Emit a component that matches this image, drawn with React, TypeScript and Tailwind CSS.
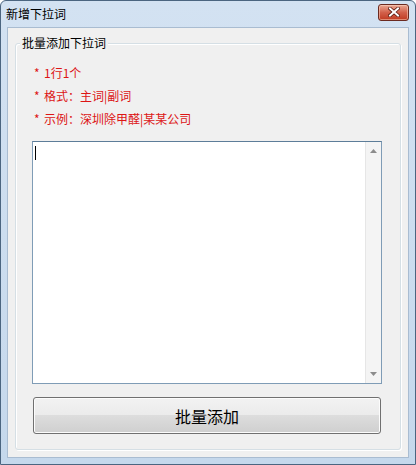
import {useState} from "react";

const TIPS = ["1行1个", "格式：主词|副词", "示例：深圳除甲醛|某某公司"];

function CloseButton() {
    return (
        <button className="w-[31px] h-[17px] mr-[6px] mt-[-4px] rounded-[3px] border border-[#6b2a20] bg-gradient-to-b from-[#e9a793] via-[#d2604a] to-[#c0391f] flex items-center justify-center shadow-[inset_0_0_0_1px_rgba(255,220,200,0.5)]">
            <svg width="12" height="10" viewBox="0 0 12 10">
                <path d="M2 1.5 L10 8.5 M10 1.5 L2 8.5" stroke="#5a1a10" strokeWidth="3.6" strokeLinecap="square" />
                <path d="M2 1.5 L10 8.5 M10 1.5 L2 8.5" stroke="#ffffff" strokeWidth="2" strokeLinecap="square" />
            </svg>
        </button>
    );
}

function ScrollBar() {
    return (
        <div className="w-[16px] h-full flex flex-col items-center justify-between bg-[#f4f4f4] border-l border-[#e6e6e6] py-[7px]">
            <svg width="7" height="4" viewBox="0 0 7 4">
                <path d="M0 4 L3.5 0 L7 4 Z" fill="#8c8c8c" />
            </svg>
            <svg width="7" height="4" viewBox="0 0 7 4">
                <path d="M0 0 L3.5 4 L7 0 Z" fill="#8c8c8c" />
            </svg>
        </div>
    );
}

export default function App() {
    const [text, setText] = useState("");

    return (
        <div className="w-[416px] h-[465px] flex flex-col bg-gradient-to-b from-[#d3e2f2] to-[#c5d8ec] border border-[#4b6580] rounded-t-[6px] font-['Noto_Sans_CJK_SC',sans-serif] overflow-hidden">
            {/* 标题栏 */}
            <div className="h-[26px] flex items-center justify-between pl-[5px]">
                <span className="text-[12px] leading-none text-black">新增下拉词</span>
                <CloseButton />
            </div>
            <div className="flex-1 mx-[6px] mb-[6px] border border-[#a9bcd1] bg-[#f0f0f0] pt-[15px] px-[7px]">
                {/* 分组框 */}
                <div className="relative h-[407px] border border-[#d5dfe5] rounded-[3px] shadow-[1px_1px_0_#ffffff,inset_1px_1px_0_#ffffff]">
                    <span className="absolute left-[4px] top-[-9px] px-[2px] bg-[#f0f0f0] text-[12px] leading-[16px] text-black">批量添加下拉词</span>
                    <div className="pt-[17px] pl-[18px] flex flex-col">
                        {TIPS.map((tip) => (
                            <div key={tip} className="flex items-center gap-[4px] h-[23px] text-[12px] text-[#dd1515]">
                                <span className="w-[6px]">*</span>
                                <span>{tip}</span>
                            </div>
                        ))}
                    </div>
                    <div className="mt-[11px] ml-[16px] w-[350px] h-[243px] flex border border-[#7f9cb6] border-t-[#5d7d99] bg-white">
                        <div className="relative flex-1">
                            <textarea
                                value={text}
                                onChange={(e) => setText(e.target.value)}
                                className="w-full h-full resize-none outline-none pl-[3px] pt-[2px] text-[12px] bg-transparent"
                            />
                            {text === "" && <span className="absolute left-[2px] top-[4px] w-[1px] h-[14px] bg-black" />}
                        </div>
                        <ScrollBar />
                    </div>
                    <button className="mt-[13px] ml-[17px] w-[348px] h-[37px] rounded-[3px] border border-[#707070] bg-[linear-gradient(#f2f2f2_0%,#ebebeb_50%,#dddddd_50%,#cfcfcf_100%)] shadow-[inset_0_0_0_1px_#fcfcfc] text-[16px] text-black">
                        批量添加
                    </button>
                </div>
            </div>
        </div>
    );
}
